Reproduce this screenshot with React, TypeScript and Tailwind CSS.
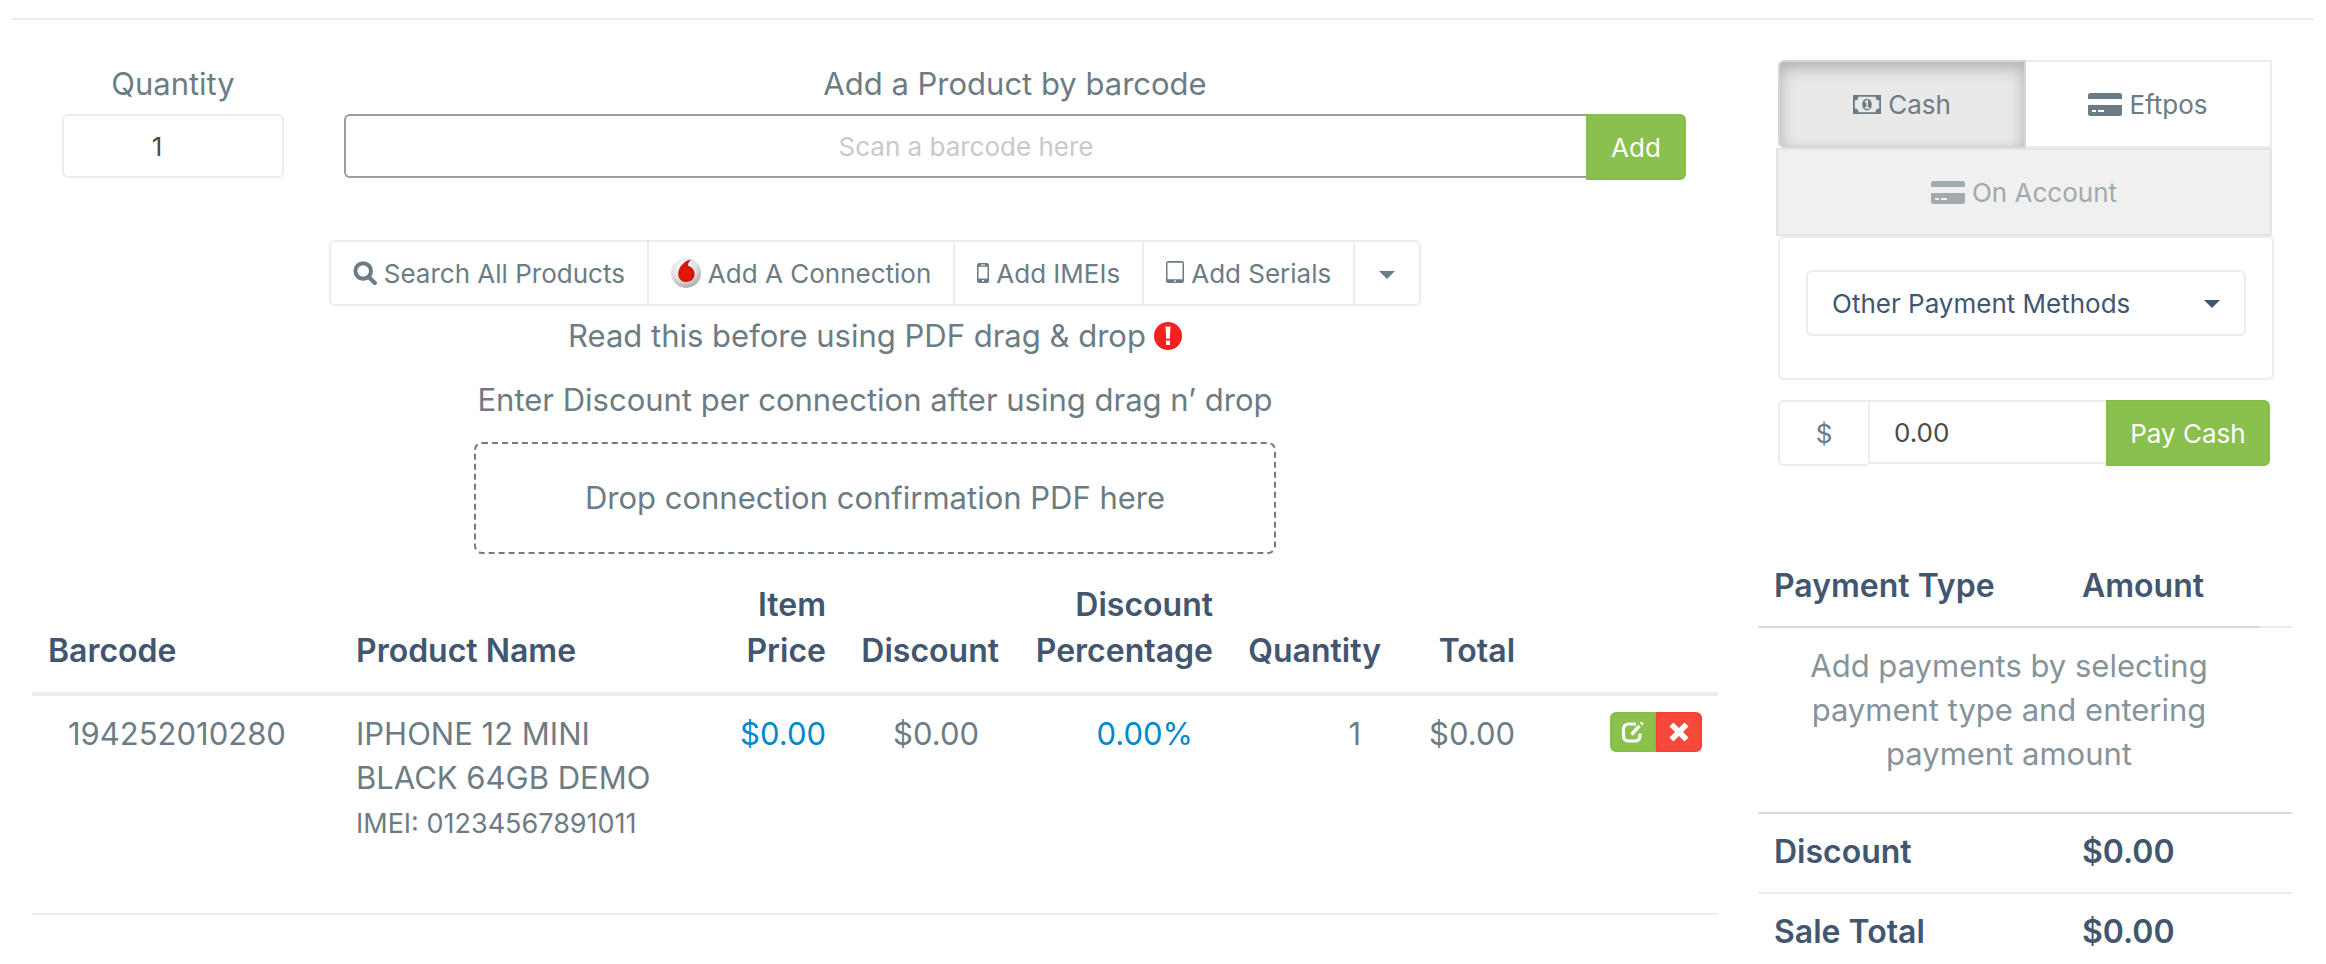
const SearchIcon = () => (
    <svg viewBox="0 0 24 24" className="h-6 w-6" fill="none" stroke="currentColor" aria-hidden="true">
        <circle cx="10.2" cy="10" r="7.8" strokeWidth="4" />
        <path d="M15.8 16l6 6" strokeWidth="4.2" strokeLinecap="round" />
    </svg>
);

const ConnectionIcon = () => (
    <svg viewBox="0 0 30 30" className="h-[30px] w-[30px]" aria-hidden="true">
        <defs>
            <radialGradient id="silver" cx="0.4" cy="0.3" r="0.75">
                <stop offset="0" stopColor="#ffffff" />
                <stop offset="0.6" stopColor="#dedede" />
                <stop offset="1" stopColor="#a4a4a4" />
            </radialGradient>
            <radialGradient id="drop" cx="0.45" cy="0.6" r="0.6">
                <stop offset="0" stopColor="#e2180f" />
                <stop offset="0.7" stopColor="#d9150c" />
                <stop offset="1" stopColor="#a80f08" />
            </radialGradient>
        </defs>
        <circle cx="15" cy="15" r="15" fill="url(#silver)" />
        <path d="M20.5 1.8C15 2 8 7.500 7.200 15.200C6.800 20.400 10.500 24 15.300 24C20.200 24 23.500 20.400 23.500 16C23.500 11.300 20.300 8.600 17 7.700C17 5 18.300 2.900 20.500 1.800Z" fill="url(#drop)" />
    </svg>
);

const PhoneIcon = () => (
    <svg viewBox="0 0 12 20" className="h-5 w-3" fill="currentColor" aria-hidden="true">
        <path fillRule="evenodd" d="M2 0h8a2 2 0 0 1 2 2v16a2 2 0 0 1-2 2H2a2 2 0 0 1-2-2V2a2 2 0 0 1 2-2ZM1.500 3.800v11.700h9V3.800ZM4 1.600v.9h4v-.9ZM5 17v1.500h2V17Z" />
    </svg>
);

const TabletIcon = () => (
    <svg viewBox="0 0 18 22" className="mb-0.5 h-[22px] w-[18px]" fill="currentColor" aria-hidden="true">
        <path fillRule="evenodd" d="M2.500 0h13A2.500 2.500 0 0 1 18 2.500v17a2.500 2.500 0 0 1-2.500 2.500h-13A2.500 2.500 0 0 1 0 19.500v-17A2.500 2.500 0 0 1 2.500 0ZM1.500 1.800v16.400h15V1.800ZM8 19.400v1.400h2v-1.400Z" />
    </svg>
);

const Caret = ({ className = "" }: { className?: string }) => (
    <svg viewBox="0 0 16 8" className={`h-2 w-4 ${className}`} fill="currentColor" aria-hidden="true">
        <path d="M0 0h16L8 8Z" />
    </svg>
);

const AlertIcon = () => (
    <svg viewBox="0 0 28 28" className="h-7 w-7" aria-hidden="true">
        <circle cx="14" cy="14" r="14" fill="#f5211c" />
        <path d="M11.500 4.500h5l-.7 12.300h-3.600ZM12 18.600h4v4.400h-4Z" fill="#fff" />
    </svg>
);

const MoneyIcon = () => (
    <svg viewBox="0 0 28 19" className="h-[19px] w-7" fill="currentColor" aria-hidden="true">
        <path fillRule="evenodd" d="M0 0h28v19H0ZM5.500 1.800A3.700 3.700 0 0 1 1.800 5.500v8A3.700 3.700 0 0 1 5.500 17.200h17a3.700 3.700 0 0 1 3.700-3.700v-8a3.700 3.700 0 0 1-3.700-3.700Z" />
        <ellipse cx="14" cy="9.500" rx="4.800" ry="6" />
        <path d="M12 7.300L14.200 5.500V12.800M11.800 13h4.600" fill="none" stroke="#e9e9e9" strokeWidth="1.500" />
    </svg>
);

const CardIcon = () => (
    <svg viewBox="0 0 34 23" className="h-[23px] w-[34px]" fill="currentColor" aria-hidden="true">
        <path d="M2.500 0h29A2.500 2.500 0 0 1 34 2.500V6H0V2.500A2.500 2.500 0 0 1 2.500 0Z" />
        <path fillRule="evenodd" d="M0 12h34v8.500a2.500 2.500 0 0 1-2.500 2.500h-29A2.500 2.500 0 0 1 0 20.500ZM4 17v2h4v-2ZM10 17v2h6v-2Z" />
    </svg>
);

const EditIcon = () => (
    <svg viewBox="0 0 24 22" className="h-[22px] w-6" fill="none" stroke="#fff" aria-hidden="true">
        <path d="M15 3H7.500A5 5 0 0 0 2.500 8v7a5 5 0 0 0 5 5h6.500a5 5 0 0 0 5-5v-2.500" strokeWidth="3.200" />
        <path d="M10.500 13.500L18.500 4.800" strokeWidth="3.400" />
        <path d="M20 3.200L21.600 1.600" strokeWidth="3.400" />
    </svg>
);

const RemoveIcon = () => (
    <svg viewBox="0 0 20 20" className="h-5 w-5" fill="none" stroke="#fff" strokeWidth="5.600" aria-hidden="true">
        <path d="M2.500 2.500l15 15M17.500 2.500l-15 15" />
    </svg>
);

const toolButton = "flex items-center gap-[7px] border-r-2 border-[#ececec] px-[22px]";

const totals = [
    { label: "Discount", amount: "$0.00" },
    { label: "Sale Total", amount: "$0.00" },
];

const SaleForm = () => {
    return (
        <div className="flex">
            <div className="w-[312px] shrink-0 pr-[60px] pl-[30px] text-center">
                <label htmlFor="quantity" className="block text-[31px] leading-[44px]">Quantity</label>
                <input id="quantity" type="text" defaultValue="1" className="mt-2 h-16 w-full rounded-md border-2 border-[#ececec] pr-8 text-center text-[26px] text-[#4a4a4a] outline-none" />
            </div>
            <div className="flex-1 pr-8 text-center">
                <label htmlFor="barcode" className="block text-[31px] leading-[44px]">Add a Product by barcode</label>
                <div className="mt-2 flex items-start">
                    <input id="barcode" type="text" placeholder="Scan a barcode here" className="h-16 min-w-0 flex-1 rounded-l-md border-2 border-r-0 border-[#9d9d9d] text-center text-[26px] outline-none placeholder:text-[#c6cacd]" />
                    <button className="h-[66px] w-[100px] rounded-r-md border-2 border-[#86bd43] bg-[#8ac04d] text-[26px] text-white">Add</button>
                </div>
            </div>
        </div>
    );
};

const Toolbar = () => {
    return (
        <div className="mx-auto mt-[60px] flex h-[66px] w-fit rounded-md border-2 border-[#ececec] text-[26px]">
            <button className={toolButton}><SearchIcon />Search All Products</button>
            <button className={toolButton}><ConnectionIcon />Add A Connection</button>
            <button className={toolButton}><PhoneIcon />Add IMEIs</button>
            <button className={toolButton}><TabletIcon />Add Serials</button>
            <button className="px-6 pt-1" aria-label="More actions"><Caret /></button>
        </div>
    );
};

const ProductTable = () => {
    return (
        <table className="mt-7 w-full table-fixed">
            <thead>
                <tr className="border-b-4 border-[#ececec] text-right align-bottom text-[32px] leading-[46px] text-[#42566f]">
                    <th className="w-[308px] px-4 pb-[18px] text-left font-semibold">Barcode</th>
                    <th className="px-4 pb-[18px] text-left font-semibold">Product Name</th>
                    <th className="w-[152px] px-4 pb-[18px] font-semibold">Item<br />Price</th>
                    <th className="w-[173px] px-4 pb-[18px] font-semibold">Discount</th>
                    <th className="w-[214px] px-4 pb-[18px] font-semibold">Discount<br />Percentage</th>
                    <th className="w-[168px] px-4 pb-[18px] font-semibold">Quantity</th>
                    <th className="w-[134px] px-4 pb-[18px] font-semibold">Total</th>
                    <th className="w-[187px]" aria-label="Actions"></th>
                </tr>
            </thead>
            <tbody>
                <tr className="h-[220px] border-b-2 border-[#ececec] text-right align-top text-[31px] leading-[44px]">
                    <td className="py-4 pr-4 pl-9 text-left">194252010280</td>
                    <td className="px-4 py-4 text-left">
                        IPHONE 12 MINI<br />BLACK 64GB DEMO
                        <div className="mt-0.5 text-[27px] leading-[44px]">IMEI: 01234567891011</div>
                    </td>
                    <td className="px-4 py-4"><a href="#" className="text-[#0088cc]">$0.00</a></td>
                    <td className="py-4 pr-9">$0.00</td>
                    <td className="py-4 pr-9"><a href="#" className="text-[#0088cc]">0.00%</a></td>
                    <td className="py-4 pr-9">1</td>
                    <td className="px-4 py-4">$0.00</td>
                    <td className="px-4 py-4">
                        <div className="flex justify-end">
                            <button aria-label="Edit" className="flex h-10 w-[46px] items-center justify-center rounded-l-md border-2 border-[#86bd43] bg-[#8ac04d]"><EditIcon /></button>
                            <button aria-label="Remove" className="flex h-10 w-[46px] items-center justify-center rounded-r-md border-2 border-[#f44336] bg-[#f6493e]"><RemoveIcon /></button>
                        </div>
                    </td>
                </tr>
            </tbody>
        </table>
    );
};

const PaymentPanel = () => {
    return (
        <div className="mr-5 ml-5 text-[26px]">
            <div className="flex h-[88px]">
                <button className="flex flex-1 items-center justify-center gap-[7px] rounded-l-md border-2 border-[#d5d5d5] bg-[#e9e9e9] shadow-[inset_0_6px_16px_rgba(0,0,0,0.25)]"><MoneyIcon />Cash</button>
                <button className="flex flex-1 items-center justify-center gap-[7px] border-2 border-l-0 border-[#ececec]"><CardIcon />Eftpos</button>
            </div>
            <button disabled className="-ml-0.5 flex h-[88px] w-[calc(100%+2px)] items-center justify-center gap-[7px] border-2 border-[#e5e5e5] bg-[#f0f0f0] text-[#a1aaaf]"><CardIcon />On Account</button>
            <div className="-mr-0.5 rounded-md border-2 border-[#ececec] px-[26px] pt-8 pb-[42px]">
                <div className="relative text-[#42566f]">
                    <select aria-label="Other payment methods" className="block h-[66px] w-full appearance-none rounded-md border-2 border-[#ececec] bg-white pr-12 pl-6 outline-none">
                        <option>Other Payment Methods</option>
                    </select>
                    <Caret className="pointer-events-none absolute top-[30px] right-[26px]" />
                </div>
            </div>
            <div className="mt-5 mr-0.5 flex items-start">
                <span className="flex h-[66px] w-[90px] items-center justify-center rounded-l-md border-2 border-r-0 border-[#ececec]">$</span>
                <input type="text" aria-label="Amount" defaultValue="0.00" className="h-16 min-w-0 flex-1 border-2 border-r-0 border-[#ececec] pl-6 text-[#4a4a4a] outline-none" />
                <button className="h-[66px] w-[164px] rounded-r-md border-2 border-[#86bd43] bg-[#8ac04d] text-white">Pay Cash</button>
            </div>
        </div>
    );
};

const PaymentTable = () => {
    return (
        <table className="mt-[90px] w-full table-fixed text-left text-[32px] leading-[44px] text-[#42566f]">
            <thead>
                <tr>
                    <th className="w-[308px] border-b-2 border-[#d9dadb] px-4 pt-2 pb-[18px] font-semibold">Payment Type</th>
                    <th className="border-b-2 border-[#d9dadb] px-4 pt-2 pb-[18px] font-semibold">Amount</th>
                    <th className="w-8 border-b-2 border-[#ececec]"></th>
                </tr>
            </thead>
            <tbody>
                <tr className="border-b-2 border-[#d9dadb]">
                    <td colSpan={2} className="px-9 pt-4 pb-9 text-center text-[31px] text-[#87939a]">Add payments by selecting payment type and entering payment amount</td>
                    <td></td>
                </tr>
                {totals.map((row) => (
                    <tr key={row.label} className="border-b-2 border-[#ececec] last:border-b-0">
                        <th className="px-4 pt-4 pb-[18px] font-semibold">{row.label}</th>
                        <td colSpan={2} className="px-4 pt-4 pb-[18px] font-semibold">{row.amount}</td>
                    </tr>
                ))}
            </tbody>
        </table>
    );
};

const App = () => {
    return (
        <div className="bg-white px-3 pt-[18px] font-['Inter','Liberation_Sans',sans-serif] text-[#6c7c84]">
            <hr className="border-t-2 border-[#ececec]" />
            <div className="flex gap-10 pt-10 pr-[22px] pl-5">
                <main className="min-w-0 flex-1 pt-0.5">
                    <SaleForm />
                    <Toolbar />
                    <div className="text-center text-[31px] leading-[44px]">
                        <p className="mt-2 flex items-center justify-center gap-2">Read this before using PDF drag &amp; drop <AlertIcon /></p>
                        <p className="mt-5">Enter Discount per connection after using drag n’ drop</p>
                        <div className="mx-auto mt-5 flex h-28 w-[802px] items-center justify-center rounded-lg border-2 border-dashed border-[#6c7c84]">Drop connection confirmation PDF here</div>
                    </div>
                    <ProductTable />
                </main>
                <aside className="w-[534px] shrink-0">
                    <PaymentPanel />
                    <PaymentTable />
                </aside>
            </div>
        </div>
    );
};

export default App;
